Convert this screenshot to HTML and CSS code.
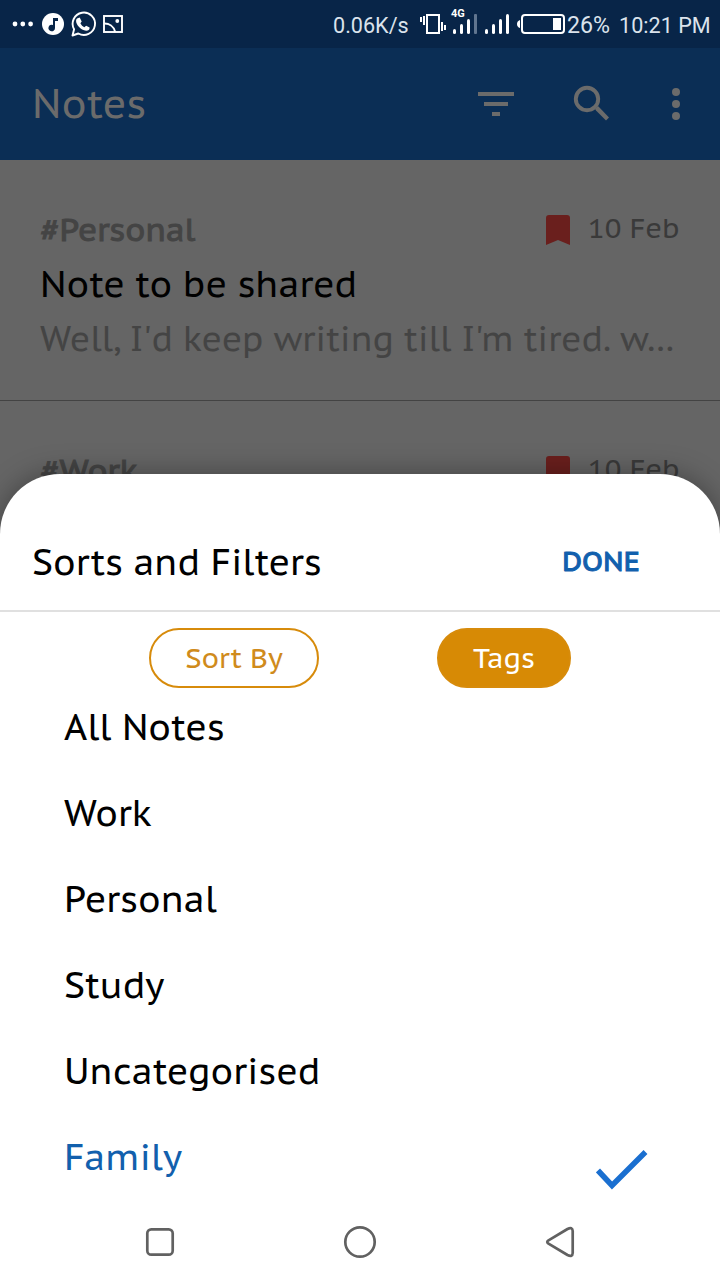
FILE: index.html
```html
<!DOCTYPE html>
<html lang="en">
<head>
<meta charset="utf-8">
<title>Notes</title>
<link rel="stylesheet" href="styles.css">
</head>
<body>
<div class="screen">
  <div class="status">
    <svg class="status-left" width="130" height="48" viewBox="0 0 130 48" fill="#fff">
      <circle cx="15" cy="24" r="2.4"/><circle cx="22.8" cy="24" r="2.4"/><circle cx="30.6" cy="24" r="2.4"/>
      <circle cx="53" cy="24" r="11"/>
      <path d="M53 18h5v3h-3v7a3.300 3.300 0 1 1-2-3z" fill="#082548"/>
      <path d="M72.500 35.500l1.600-6.200A11.200 11.200 0 1 1 78.300 33.500z" fill="none" stroke="#fff" stroke-width="1.900" stroke-linejoin="round"/>
      <path d="M77.700 18.200l2-.7 2 4-1.300 1.800c1 2 2.200 3.100 4 4l1.700-1.500 3.500 1.800c.2 2.200-1.500 3.300-3.500 3.200-5.500-.7-10.500-6.200-10-10.500.1-1 .7-1.700 1.600-2.100z"/>
      <g fill="none" stroke="#fff" stroke-width="1.900"><rect x="104" y="16" width="18" height="16"/><path d="M104 23.500c5-.2 9.800 2.500 11.200 8.500"/></g>
      <circle cx="117.300" cy="21" r="1.900"/>
    </svg>
    <span class="status-text speed">0.06K/s</span>
    <svg class="status-icons" width="150" height="48" viewBox="418 0 150 48" fill="#fff">
      <path d="M420 17h2v5h-2zM423 16h2v9h-2zM441 22h2v9h-2zM444 25h2v5h-2z"/>
      <rect x="427" y="15" width="12" height="18" fill="none" stroke="#fff" stroke-width="2"/>
      <text class="network" x="451" y="16.500">4G</text>
      <rect x="453" y="29" width="3" height="5" rx="1.500"/><rect x="460" y="24" width="3" height="10" rx="1.500"/><rect x="467" y="19" width="3" height="15" rx="1.500"/><rect x="474" y="14" width="3" height="20" rx="1" fill="#60758f"/>
      <rect x="485" y="29" width="3" height="5" rx="1.500"/><rect x="492" y="24" width="3" height="10" rx="1.500"/><rect x="499" y="19" width="3" height="15" rx="1.500"/><rect x="506" y="14" width="3" height="20" rx="1.500"/>
      <path d="M520 20v8q-3-1-3-4t3-4z"/>
      <rect x="522" y="15" width="42" height="18" rx="3" fill="none" stroke="#fff" stroke-width="2"/>
      <rect x="553" y="18" width="8" height="12"/>
    </svg>
    <span class="status-text percent">26%</span>
    <span class="status-text clock">10:21 PM</span>
  </div>

  <header class="appbar">
    <h1 class="appbar-title">Notes</h1>
    <svg class="appbar-icons" width="250" height="112" viewBox="470 48 250 112" fill="#6b6b6b">
      <path d="M478 92h36v4h-36zM484 102h24v4h-24zM492 112h8v4h-8z"/>
      <circle cx="587" cy="99" r="11.200" fill="none" stroke="#6b6b6b" stroke-width="3.900"/>
      <path d="M595 109l3-3 11 11.500-3 3-10-10z"/>
      <circle cx="676" cy="92" r="4"/><circle cx="676" cy="104" r="4"/><circle cx="676" cy="116" r="4"/>
    </svg>
  </header>

  <main class="notes">
    <article class="note">
      <div class="note-head">
        <span class="note-tag">#Personal</span>
        <svg class="bookmark" width="24" height="30" viewBox="0 0 24 30"><path d="M0 30V3q0-3 3-3h18q3 0 3 3v27l-12-5z" fill="#6a1f1d"/></svg>
        <span class="note-date">10 Feb</span>
      </div>
      <div class="note-title">Note to be shared</div>
      <div class="note-body">Well, I'd keep writing till I'm tired. w…</div>
    </article>
    <article class="note">
      <div class="note-head">
        <span class="note-tag">#Work</span>
        <svg class="bookmark" width="24" height="30" viewBox="0 0 24 30"><path d="M0 30V3q0-3 3-3h18q3 0 3 3v27l-12-5z" fill="#6a1f1d"/></svg>
        <span class="note-date">10 Feb</span>
      </div>
    </article>
  </main>

  <section class="sheet">
    <div class="sheet-head">
      <h2 class="sheet-title">Sorts and Filters</h2>
      <span class="done">DONE</span>
    </div>
    <div class="chips">
      <span class="chip chip-sort">Sort By</span>
      <span class="chip chip-tags">Tags</span>
    </div>
    <ul class="tags">
      <li class="tag">All Notes</li>
      <li class="tag">Work</li>
      <li class="tag">Personal</li>
      <li class="tag">Study</li>
      <li class="tag">Uncategorised</li>
      <li class="tag tag-selected"><span>Family</span>
        <svg class="check" width="52" height="40" viewBox="0 0 52 40"><path d="M2 20.500L16 35.500 49.500 2" fill="none" stroke="#1a6fd0" stroke-width="5.500"/></svg>
      </li>
    </ul>
    <nav class="navbar">
      <svg width="720" height="76" viewBox="0 1204 720 76" fill="none" stroke="#616161" stroke-width="2.700" stroke-linejoin="round">
        <rect x="147.300" y="1229.300" width="25.400" height="25.400" rx="4"/>
        <circle cx="360" cy="1242" r="14.700"/>
        <path d="M548.500 1240.300L567.500 1229Q572.500 1226.500 572.700 1231V1253Q572.500 1257.500 567.500 1255L548.500 1243.700Q546 1242 548.500 1240.300z"/>
      </svg>
    </nav>
  </section>
</div>
</body>
</html>
```

FILE: styles.css
```css
* { box-sizing: border-box; }
body { margin: 0; }
.screen {
  position: relative;
  width: 720px;
  height: 1280px;
  overflow: hidden;
  background: #656565;
  font-family: "PT Sans Caption", "Noto Sans", sans-serif;
  white-space: nowrap;
}
h1, h2, ul { margin: 0; padding: 0; font-weight: 400; list-style: none; }
svg { display: block; flex: none; }

.status { display: flex; height: 48px; background: #082548; }
.status-left { margin-right: 203px; }
.status-text {
  font-family: Roboto, sans-serif;
  font-size: 21.6px;
  line-height: 51px;
  color: #dbe3ec;
}
.speed { width: 85px; }
.percent { width: 52px; margin-left: -1px; font-size: 23.2px; }
.network { font: 700 11px Roboto, sans-serif; }

.appbar { display: flex; justify-content: space-between; height: 112px; background: #0b2e55; }
.appbar-title { padding-left: 32px; font-size: 40px; line-height: 111px; color: #6b6b6b; }

.note { height: 241px; padding: 40px 40px 0; border-bottom: 1px solid #434343; }
.note-head { display: flex; height: 58px; }
.note-tag { flex: 1; padding-left: 0.5px; font-size: 32px; line-height: 58px; color: #444; -webkit-text-stroke: 1px #444; }
.bookmark { margin: 15px 18px 0 0; }
.note-date { width: 92px; font-size: 28px; line-height: 55px; color: #3a3a3a; }
.note-title { height: 54px; font-size: 36px; line-height: 52px; color: #000; }
.note-body { font-size: 34.15px; line-height: 52px; color: #444; }

.sheet {
  position: absolute;
  inset: 474px 0 0;
  background: #fff;
  border-radius: 60px 60px 0 0;
  box-shadow: 0 0 28px rgba(0, 0, 0, 0.35);
}
.sheet-head {
  display: flex;
  justify-content: space-between;
  height: 138px;
  padding: 38px 80px 0 32px;
  border-bottom: 2px solid #e0e0e0;
}
.sheet-title { font-size: 36px; line-height: 99px; color: #000; }
.done { font-size: 28px; line-height: 97px; color: #1260ad; -webkit-text-stroke: 1px #1260ad; }
.chips { display: flex; gap: 118px; padding: 16px 149px 0; }
.chip {
  height: 60px;
  border: 2px solid #d78b0b;
  border-radius: 30px;
  font-size: 28px;
  line-height: 56px;
  text-align: center;
}
.chip-sort { width: 170px; color: #d08b1c; }
.chip-tags { width: 134px; background: #d78a05; color: #fff; }
.tags { height: 516px; padding: 0 72px 0 64px; }
.tag { display: flex; justify-content: space-between; height: 86px; font-size: 36px; line-height: 78px; color: #000; }
.tag-selected { color: #1260ad; }
.check { margin-top: 32px; }
.navbar { height: 76px; }
```
